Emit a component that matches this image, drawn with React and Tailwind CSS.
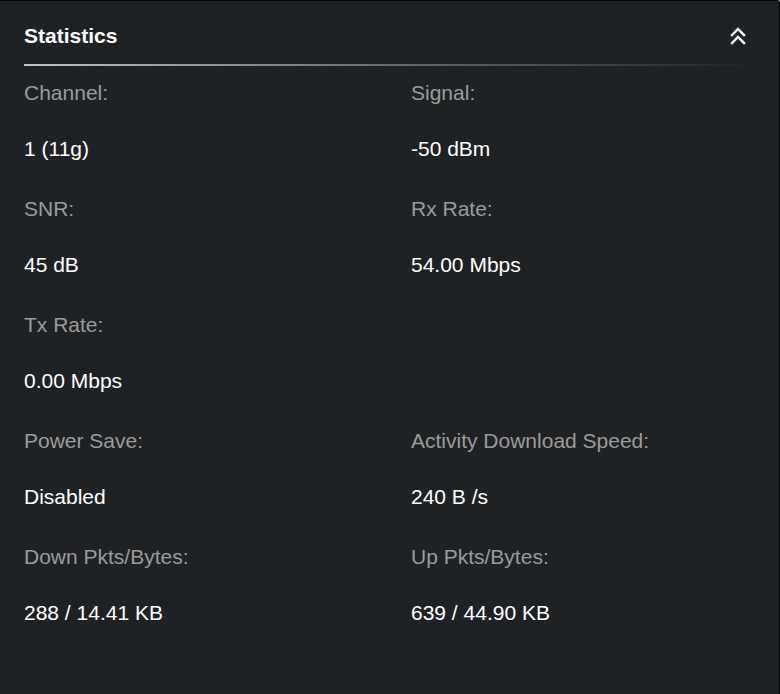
const stats = [
    [{ label: 'Channel:', value: '1 (11g)' }, { label: 'Signal:', value: '-50 dBm' }],
    [{ label: 'SNR:', value: '45 dB' }, { label: 'Rx Rate:', value: '54.00 Mbps' }],
    [{ label: 'Tx Rate:', value: '0.00 Mbps' }, null],
    [{ label: 'Power Save:', value: 'Disabled' }, { label: 'Activity Download Speed:', value: '240 B /s' }],
    [{ label: 'Down Pkts/Bytes:', value: '288 / 14.41 KB' }, { label: 'Up Pkts/Bytes:', value: '639 / 44.90 KB' }],
];

function Cell({ item }) {
    if (!item) return <div />;
    return (
        <div className="flex flex-col">
            <div className="leading-[24px] text-[#9b9b9b]">{item.label}</div>
            <div className="mt-[32px] leading-[24px] text-white">{item.value}</div>
        </div>
    );
}

export default function App() {
    return (
        <div
            className="w-[780px] h-[694px] bg-[#1f2225] border-t border-r border-black rounded-tr-[3px] overflow-hidden text-[21px]"
            style={{ fontFamily: '"Liberation Sans", Arial, sans-serif' }}
        >
            {/* Header */}
            <div className="flex items-center justify-between pl-6 pr-[33px] pt-[23px]">
                <h2 className="font-bold text-white leading-[24px] text-[21px]">Statistics</h2>
                <svg width="16" height="18" viewBox="0 0 16 18" fill="none" stroke="white" strokeWidth="2.4" strokeLinecap="square">
                    <path d="M2 8 L8 2 L14 8" />
                    <path d="M2 16 L8 10 L14 16" />
                </svg>
            </div>

            {/* Divider */}
            <div className="ml-6 mr-[24px] mt-[16px] h-[2px] bg-gradient-to-r from-[#c4c4c4] via-[#6a6a6a] to-transparent" />

            {/* Stats grid */}
            <div className="flex flex-col gap-[36px] px-6 pt-[15px]">
                {stats.map((row, i) => (
                    <div key={i} className="grid grid-cols-[387px_1fr]">
                        <Cell item={row[0]} />
                        <Cell item={row[1]} />
                    </div>
                ))}
            </div>
        </div>
    );
}
